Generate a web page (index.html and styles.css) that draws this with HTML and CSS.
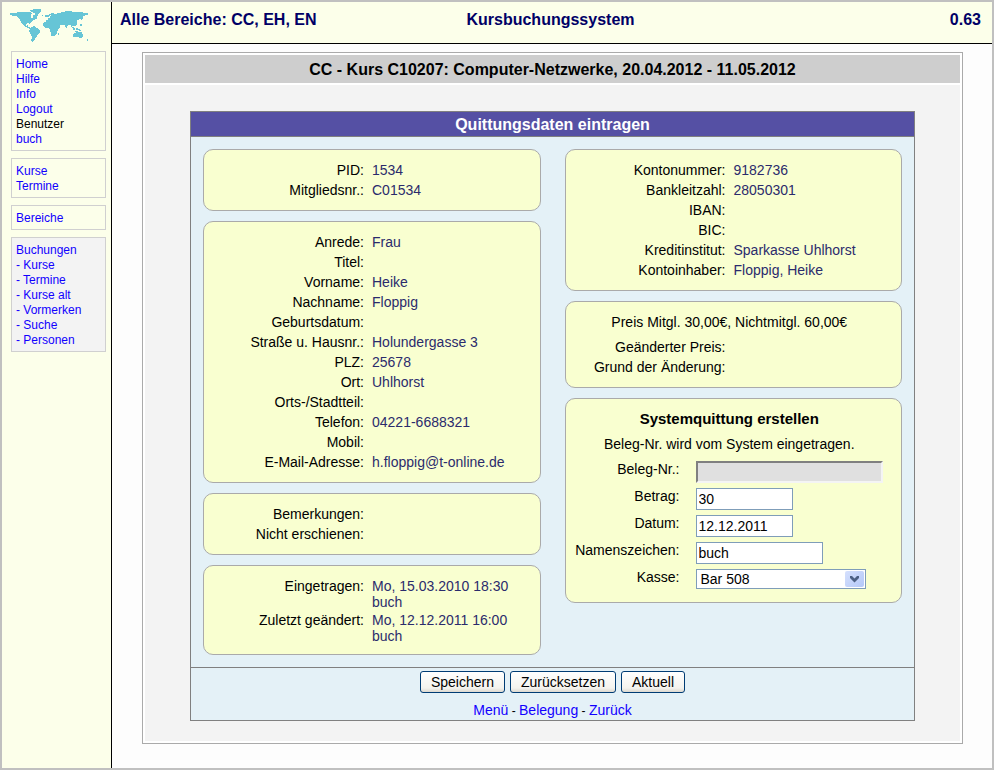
FILE: index.html
```html
<!DOCTYPE html>
<html lang="de">
<head>
    <meta charset="UTF-8">
    <meta name="viewport" content="width=device-width, initial-scale=1.0">
    <title>Kursbuchungssystem</title>
    <link rel="stylesheet" href="styles.css">
</head>
<body>
    <div class="page">
        <aside class="sidebar">
            <svg class="logo" viewBox="33 27 240 102" role="img" aria-label="Weltkarte">
                <!-- North America, Greenland, South America -->
                <path d="M30 36h22l10-3 8 0 6 3 12-2 8 4-4 6v6l6 3 2-9 8 2 5 6-6 4-9 4-6 6-4 4-4-2-6 2v6l6-2 2 6 6 2-2 3-8-3-10-6-8-10-6-10-6-8-8-2-9 2 4-5-9-1z"/>
                <path d="M90 30l14-4 18 1 1 6-7 8-6 7-4-2-2-8-8-3z"/>
                <path d="M93 80l10-3 8 6 9 5-1 10-8 8-6 10-6 8-5-2 1-14-5-10-3-8z"/>
                <!-- Europe, Asia -->
                <path d="M138 47l12-7 9-3 7 4 19-6 23-5 12 4 20 1 24 3v5l-12 3-3 4-3 12-4-6-10 2v8l-3 8-2 4-4-2-5-1-3 6-4-9-7 2-6 10-5-10-10-2-6 10-8 2-6-12-2-6-8 1-4-4-4 4-8-1 1-7 7-1-2-5 8-2-1-3 3-4-4 1-1 5-6 1z"/>
                <path d="M135 42h5v6h-6zM126 42h4v3h-4z"/>
                <!-- Africa -->
                <path d="M132 64l18-2 16 4 7 13 7 1-7 10-5 13-8 5-6-3-3-14-4-8-13-2-5-8z"/>
                <path d="M174 96h3v6h-4z"/>
                <!-- Australia, islands -->
                <path d="M216 80h5l5 6-1 5-5-4zM228 82h6l2 6-6 2zM237 85l6 3 3 5-8-3zM224 91h10v3h-10z"/>
                <path d="M220 100l9-4 5-2 5 2 4-3 6 10-2 8-6 3-8-5-7 2-6-1zM261 114h3v6h-3zM242 69h4v6h-6z"/>
            </svg>
            <nav class="menu">
                <a href="#">Home</a>
                <a href="#">Hilfe</a>
                <a href="#">Info</a>
                <a href="#">Logout</a>
                <span>Benutzer</span>
                <a href="#">buch</a>
            </nav>
            <nav class="menu">
                <a href="#">Kurse</a>
                <a href="#">Termine</a>
            </nav>
            <nav class="menu">
                <a href="#">Bereiche</a>
            </nav>
            <nav class="menu active">
                <a href="#">Buchungen</a>
                <a href="#">- Kurse</a>
                <a href="#">- Termine</a>
                <a href="#">- Kurse alt</a>
                <a href="#">- Vormerken</a>
                <a href="#">- Suche</a>
                <a href="#">- Personen</a>
            </nav>
        </aside>

        <div class="content">
            <header class="topbar">
                <span>Alle Bereiche: CC, EH, EN</span>
                <span>Kursbuchungssystem</span>
                <span class="version">0.63</span>
            </header>

            <main class="frame">
                <h1>CC - Kurs C10207: Computer-Netzwerke, 20.04.2012 - 11.05.2012</h1>
                <div class="frame-body">
                    <form class="panel">
                        <h2>Quittungsdaten eintragen</h2>
                        <div class="columns">
                            <div class="column">
                                <dl class="card data">
                                    <dt>PID:</dt><dd>1534</dd>
                                    <dt>Mitgliedsnr.:</dt><dd>C01534</dd>
                                </dl>
                                <dl class="card data">
                                    <dt>Anrede:</dt><dd>Frau</dd>
                                    <dt>Titel:</dt><dd></dd>
                                    <dt>Vorname:</dt><dd>Heike</dd>
                                    <dt>Nachname:</dt><dd>Floppig</dd>
                                    <dt>Geburtsdatum:</dt><dd></dd>
                                    <dt>Straße u. Hausnr.:</dt><dd>Holundergasse 3</dd>
                                    <dt>PLZ:</dt><dd>25678</dd>
                                    <dt>Ort:</dt><dd>Uhlhorst</dd>
                                    <dt>Orts-/Stadtteil:</dt><dd></dd>
                                    <dt>Telefon:</dt><dd>04221-6688321</dd>
                                    <dt>Mobil:</dt><dd></dd>
                                    <dt>E-Mail-Adresse:</dt><dd>h.floppig@t-online.de</dd>
                                </dl>
                                <dl class="card data">
                                    <dt>Bemerkungen:</dt><dd></dd>
                                    <dt>Nicht erschienen:</dt><dd></dd>
                                </dl>
                                <dl class="card data">
                                    <dt>Eingetragen:</dt><dd>Mo, 15.03.2010 18:30<br>buch</dd>
                                    <dt>Zuletzt geändert:</dt><dd>Mo, 12.12.2011 16:00<br>buch</dd>
                                </dl>
                            </div>

                            <div class="column">
                                <dl class="card data">
                                    <dt>Kontonummer:</dt><dd>9182736</dd>
                                    <dt>Bankleitzahl:</dt><dd>28050301</dd>
                                    <dt>IBAN:</dt><dd></dd>
                                    <dt>BIC:</dt><dd></dd>
                                    <dt>Kreditinstitut:</dt><dd>Sparkasse Uhlhorst</dd>
                                    <dt>Kontoinhaber:</dt><dd>Floppig, Heike</dd>
                                </dl>
                                <div class="card">
                                    <p>Preis Mitgl. 30,00€, Nichtmitgl. 60,00€</p>
                                    <dl class="data">
                                        <dt>Geänderter Preis:</dt><dd></dd>
                                        <dt>Grund der Änderung:</dt><dd></dd>
                                    </dl>
                                </div>
                                <div class="card">
                                    <h3>Systemquittung erstellen</h3>
                                    <p>Beleg-Nr. wird vom System eingetragen.</p>
                                    <div class="fields">
                                        <label for="beleg">Beleg-Nr.:</label>
                                        <input type="text" id="beleg" class="large" disabled>
                                        <label for="betrag">Betrag:</label>
                                        <input type="text" id="betrag" class="small" value="30">
                                        <label for="datum">Datum:</label>
                                        <input type="text" id="datum" class="small" value="12.12.2011">
                                        <label for="zeichen">Namenszeichen:</label>
                                        <input type="text" id="zeichen" class="medium" value="buch">
                                        <label for="kasse">Kasse:</label>
                                        <div class="select">
                                            <select id="kasse">
                                                <option>Bar 508</option>
                                            </select>
                                            <svg class="arrow" viewBox="0 0 19 16" aria-hidden="true">
                                                <path d="M5 5h2l2.500 2.500L12 5h2v2l-4.500 4.500L5 7z"/>
                                            </svg>
                                        </div>
                                    </div>
                                </div>
                            </div>
                        </div>

                        <div class="actions">
                            <div class="buttons">
                                <button type="submit">Speichern</button>
                                <button type="reset">Zurücksetzen</button>
                                <button type="button">Aktuell</button>
                            </div>
                            <div class="links"><a href="#">Menü</a> - <a href="#">Belegung</a> - <a href="#">Zurück</a></div>
                        </div>
                    </form>
                </div>
            </main>
        </div>
    </div>
</body>
</html>
```

FILE: styles.css
```css
* {
    box-sizing: border-box;
}
body {
    margin: 0;
    font-family: "Liberation Sans", Arial, sans-serif;
    font-size: 14px;
    line-height: 16px;
    color: #000;
    background-color: #fdfdfd;
}
h1, h2, h3, p, dl, dd {
    margin: 0;
}
a {
    color: #10f;
    text-decoration: none;
}
a:hover {
    text-decoration: underline;
}
.page {
    display: flex;
    min-height: 100vh;
    border: 2px solid #c0c0c0;
}

/* Sidebar */
.sidebar {
    display: flex;
    flex-direction: column;
    gap: 7px;
    width: 110px;
    padding: 7px 5px 7px 9px;
    border-right: 1px solid #000;
    background-color: #fcffea;
}
.logo {
    width: 80px;
    height: 35px;
    overflow: visible;
    fill: #66c5d6;
    shape-rendering: crispEdges;
}
.menu {
    padding: 5px 4px 3px;
    border: 1px solid #d0d0d0;
    font-size: 12px;
    line-height: 15px;
}
.menu a, .menu span {
    display: block;
}
.menu.active {
    background-color: #f3f3f3;
}

/* Header */
.content {
    flex: 1;
}
.topbar {
    display: grid;
    grid-template-columns: 1fr auto 1fr;
    height: 42px;
    padding: 10px 11px 0 8px;
    border-bottom: 1px solid #000;
    background-color: #fcffea;
    color: #006;
    font-size: 16px;
    font-weight: bold;
}
.version {
    text-align: right;
}

/* Course frame */
.frame {
    margin: 8px 29px 24px 30px;
    padding: 2px;
    border: 1px solid #aaa;
    background-color: #fff;
}
.frame h1 {
    margin-bottom: 2px;
    padding: 6px 0 4px;
    background-color: #cecece;
    font-size: 16px;
    line-height: 18px;
    text-align: center;
}
.frame-body {
    padding: 26px 45px 20px;
    background-color: #f3f3f3;
}
.panel {
    border: 1px solid #808080;
    background-color: #e4f1f7;
}
.panel h2 {
    padding: 5px 0 3px;
    border-bottom: 1px solid #808080;
    background-color: #5550a4;
    color: #fff;
    font-size: 16px;
    line-height: 16px;
    text-align: center;
}
.columns {
    display: grid;
    grid-template-columns: 1fr 1fr;
    gap: 24px;
    padding: 12px;
}
.column {
    display: flex;
    flex-direction: column;
    gap: 10px;
}
.card {
    padding: 10px 8px 10px 0;
    border: 1px solid #aaa;
    border-radius: 10px;
    background-color: #f9ffd0;
}
.card h3, .card p {
    margin-bottom: 5px;
    font-size: 14px;
    line-height: 20px;
    text-align: center;
}
.card h3 {
    font-size: 15px;
}
.data {
    display: grid;
    grid-template-columns: 160px 1fr;
    grid-auto-rows: minmax(20px, auto);
    column-gap: 8px;
}
.data dt, .data dd {
    padding-top: 2px;
}
.data dt {
    text-align: right;
}
.data dd {
    color: #2b2b6c;
}

/* Receipt form */
.fields {
    display: grid;
    grid-template-columns: 114px 1fr;
    column-gap: 16px;
}
.fields label {
    padding-top: 2px;
    text-align: right;
}
input, select, button {
    font-family: inherit;
    font-size: 14px;
    color: #000;
}
input {
    height: 22px;
    margin: 2px 0 3px;
    padding: 1px 2px;
    border: 1px solid #7f9db9;
    background-color: #fff;
}
input:disabled {
    border: 2px solid;
    border-color: #808080 #f4f4f4 #f4f4f4 #808080;
    background-color: #e0e0e0;
}
.small {
    width: 97px;
}
.medium {
    width: 127px;
}
.large {
    width: 187px;
}
.select {
    position: relative;
    width: 170px;
    margin: 2px 0 3px;
}
select {
    display: block;
    width: 100%;
    height: 20px;
    padding: 0 4px;
    border: 1px solid #7f9db9;
    border-radius: 0;
    background-color: #fff;
    appearance: none;
}
.arrow {
    position: absolute;
    top: 2px;
    right: 2px;
    width: 19px;
    height: 16px;
    border-radius: 2px;
    background: linear-gradient(135deg, #d5e0fd, #b4c8f8);
    fill: #4d6185;
    pointer-events: none;
}

/* Footer */
.actions {
    padding: 3px 0 1px;
    border-top: 1px solid #808080;
    text-align: center;
}
.buttons {
    display: flex;
    justify-content: center;
    gap: 5px;
    margin-bottom: 9px;
}
.links {
    font-size: 12px;
}
.links a {
    font-size: 14px;
}
button {
    height: 22px;
    padding: 0 10px;
    border: 1px solid #003c74;
    border-radius: 3px;
    background: linear-gradient(#fff, #f4f3ee 80%, #dcd8cf);
}
```
